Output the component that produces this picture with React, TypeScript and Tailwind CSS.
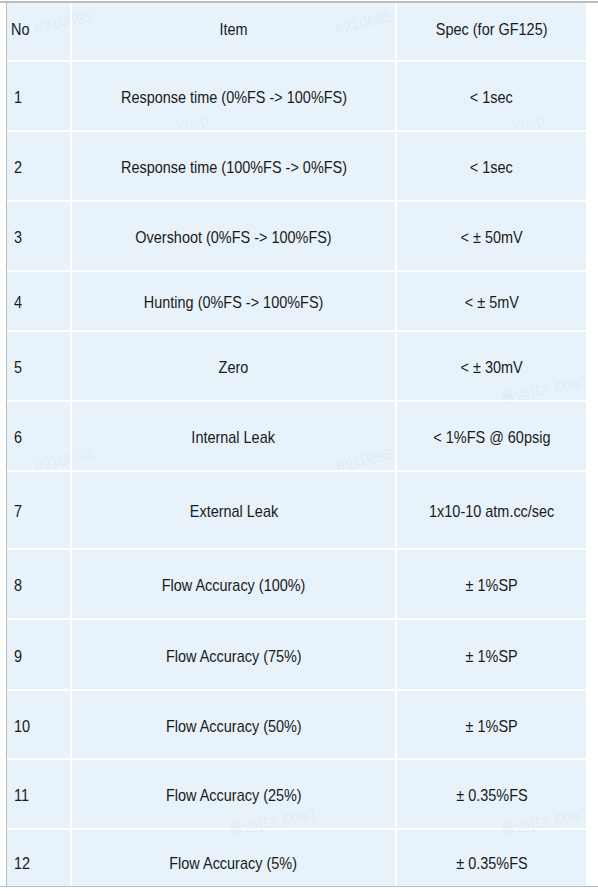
const rows = [
  { no: '1', item: 'Response time (0%FS -> 100%FS)', spec: '< 1sec', h: 'h-[68px]' },
  { no: '2', item: 'Response time (100%FS -> 0%FS)', spec: '< 1sec', h: 'h-[68px]' },
  { no: '3', item: 'Overshoot (0%FS -> 100%FS)', spec: '< ± 50mV', h: 'h-[68px]' },
  { no: '4', item: 'Hunting (0%FS -> 100%FS)', spec: '< ± 5mV', h: 'h-[58px]' },
  { no: '5', item: 'Zero', spec: '< ± 30mV', h: 'h-[68px]' },
  { no: '6', item: 'Internal Leak', spec: '< 1%FS @ 60psig', h: 'h-[68px]' },
  { no: '7', item: 'External Leak', spec: '1x10-10 atm.cc/sec', h: 'h-[76px]' },
  { no: '8', item: 'Flow Accuracy (100%)', spec: '± 1%SP', h: 'h-[68px]' },
  { no: '9', item: 'Flow Accuracy (75%)', spec: '± 1%SP', h: 'h-[69px]' },
  { no: '10', item: 'Flow Accuracy (50%)', spec: '± 1%SP', h: 'h-[67px]' },
  { no: '11', item: 'Flow Accuracy (25%)', spec: '± 0.35%FS', h: 'h-[68px]' },
  { no: '12', item: 'Flow Accuracy (5%)', spec: '± 0.35%FS', h: 'h-[56px]' },
]

// faint watermarks sitting over the table
const marks = [
  { text: 'e910695', cls: 'left-[34px] top-[14px]' },
  { text: 'e910695', cls: 'left-[334px] top-[14px]' },
  { text: 'Yoyo', cls: 'left-[176px] top-[116px]' },
  { text: 'Yoyo', cls: 'left-[512px] top-[116px]' },
  { text: '番迪(Di Zhai)', cls: 'left-[500px] top-[382px]' },
  { text: 'e910695', cls: 'left-[34px] top-[452px]' },
  { text: 'e910695', cls: 'left-[336px] top-[452px]' },
  { text: '番迪(Di Zhai)', cls: 'left-[228px] top-[814px]' },
  { text: '番迪(Di Zhai)', cls: 'left-[500px] top-[814px]' },
]

function Text({ children }: { children: React.ReactNode }) {
  return <span className="inline-block origin-center scale-x-[0.85] whitespace-nowrap">{children}</span>
}

export default function App() {
  return (
    <div
      className="relative h-[894px] w-[598px] overflow-hidden bg-white pt-px text-[17px] leading-none text-[#1a1a1a]"
      style={{ fontFamily: '"Liberation Sans", Arial, sans-serif' }}
    >
      <div className="border-t-2 border-b border-[#bdbdbd] pl-[6px]">
        <div className="flex w-[581px] flex-col gap-[2px] border-l border-[#bdbdbd] bg-white">
          <div className="grid h-[57px] grid-cols-[63px_323px_189px] gap-[2px]">
            <div className="flex items-center bg-[#e8f2fa] pb-[5px] pl-[4px]">
              <span className="inline-block origin-left scale-x-[0.85]">No</span>
            </div>
            <div className="flex items-center justify-center bg-[#e8f2fa] pb-[5px]">
              <Text>Item</Text>
            </div>
            <div className="flex items-center justify-center bg-[#e8f2fa] pb-[5px]">
              <Text>Spec (for GF125)</Text>
            </div>
          </div>
          {rows.map((r) => {
            const pad = r.no === '12' ? 'pt-[10px]' : 'pt-[3px]'
            return (
              <div key={r.no} className={`grid grid-cols-[63px_323px_189px] gap-[2px] ${r.h}`}>
                <div className={`flex items-center bg-[#e8f2fa] pl-[7px] ${pad}`}>
                  <span className="inline-block origin-left scale-x-[0.85]">{r.no}</span>
                </div>
                <div className={`flex items-center justify-center bg-[#e8f2fa] ${pad}`}>
                  <Text>{r.item}</Text>
                </div>
                <div className={`flex items-center justify-center bg-[#e8f2fa] ${pad}`}>
                  <Text>{r.spec}</Text>
                </div>
              </div>
            )
          })}
        </div>
      </div>

      {marks.map((m, i) => (
        <span
          key={i}
          className={`pointer-events-none absolute -rotate-12 whitespace-nowrap text-[15px] text-black/[0.05] ${m.cls}`}
          style={{ fontFamily: '"Liberation Sans", "Noto Sans CJK SC", sans-serif' }}
        >
          {m.text}
        </span>
      ))}
    </div>
  )
}
